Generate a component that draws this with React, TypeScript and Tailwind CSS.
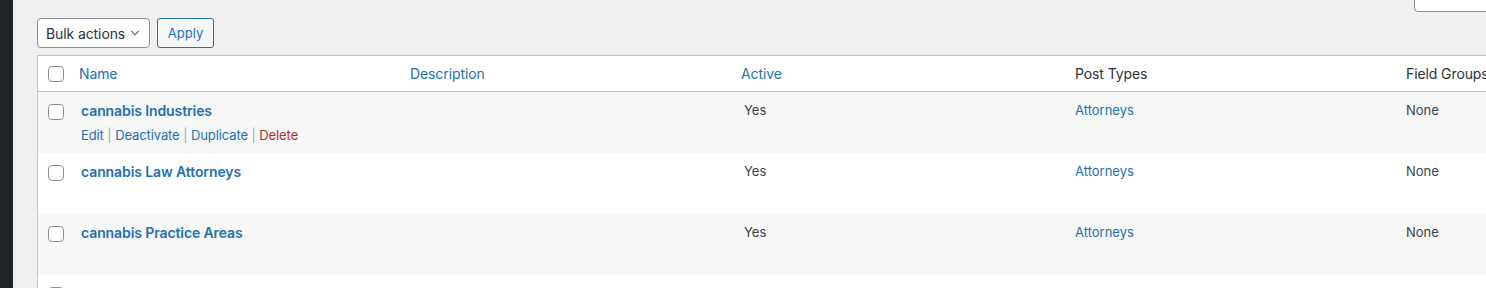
import { ChevronDown } from "lucide-react";

type Row = {
  name: string;
  description: string;
  active: string;
  postTypes: string;
  fieldGroups: string;
  actions?: boolean;
};

const rows: Row[] = [
  { name: "cannabis Industries", description: "", active: "Yes", postTypes: "Attorneys", fieldGroups: "None", actions: true },
  { name: "cannabis Law Attorneys", description: "", active: "Yes", postTypes: "Attorneys", fieldGroups: "None" },
  { name: "cannabis Practice Areas", description: "", active: "Yes", postTypes: "Attorneys", fieldGroups: "None" },
  { name: "Categories", description: "This is helpful WordPress Taxonomy", active: "Yes", postTypes: "Posts", fieldGroups: "None" },
];

const cols = "grid grid-cols-[31px_331px_331px_334px_331px_200px]";

function Checkbox() {
  return <div className="w-4 h-4 rounded-[4px] border border-[#8c8f94] bg-white" />;
}

export default function App() {
  return (
    <div className="flex h-[288px] overflow-hidden bg-[#f0f0f1] font-['Inter',sans-serif] text-[13px] text-[#3c434a]">
      <div className="w-[13px] shrink-0 bg-[#1d2327]" />
      <div className="flex-1 min-w-0 pl-[24px]">
        <div className="flex justify-end h-[18px]">
          <div className="w-[80px] h-[30px] -mt-[18px] bg-white border border-[#8c8f94] rounded-[4px] -mr-[8px]" />
        </div>
        <div className="flex gap-[7px] h-[37px]">
          <button className="h-[30px] w-[113px] flex items-center justify-between pl-[8px] pr-[7px] bg-white border border-[#8c8f94] rounded-[4px] text-[14px] tracking-[-0.1px] text-[#2c3338]">
            Bulk actions
            <ChevronDown className="w-[14px] h-[14px]" strokeWidth={1.75} />
          </button>
          <button className="h-[30px] w-[57px] pt-[2px] bg-[#f6f7f7] border border-[#2271b1] rounded-[3px] text-[13px] text-[#2271b1]">
            Apply
          </button>
        </div>
        <div className="w-[1600px] border border-[#c3c4c7] bg-white">
          <div className={`${cols} h-[36px] items-center border-b border-[#c3c4c7] text-[14px] tracking-[-0.1px]`}>
            <div className="pl-[10px]"><Checkbox /></div>
            <div className="pl-[10px] text-[#2271b1]">Name</div>
            <div className="pl-[10px] text-[#2271b1]">Description</div>
            <div className="pl-[10px] text-[#2271b1]">Active</div>
            <div className="pl-[10px] text-[#2c3338]">Post Types</div>
            <div className="pl-[10px] text-[#2c3338]">Field Groups</div>
          </div>
          {rows.map((r, i) => (
            <div key={r.name} className={`${cols} h-[61px] items-start ${i % 2 === 0 ? "bg-[#f6f7f7]" : "bg-white"}`}>
              <div className="pl-[10px] pt-[12px]"><Checkbox /></div>
              <div className="pl-[12px] pt-[9px]">
                <div className="text-[14px] leading-[20px] font-semibold tracking-[-0.1px] text-[#2271b1]">{r.name}</div>
                {r.actions && (
                  <div className="mt-[4px] leading-[20px] text-[#2271b1] tracking-[-0.1px]">
                    Edit <span className="text-[#a7aaad]">|</span> Deactivate{" "}
                    <span className="text-[#a7aaad]">|</span> Duplicate{" "}
                    <span className="text-[#a7aaad]">|</span>{" "}
                    <span className="text-[#b32d2e]">Delete</span>
                  </div>
                )}
              </div>
              <div className="pl-[10px] pt-[9px] leading-[20px]">{r.description}</div>
              <div className="pl-[13px] pt-[8px] leading-[20px]">{r.active}</div>
              <div className="pl-[10px] pt-[8px] leading-[20px] text-[#2271b1]">{r.postTypes}</div>
              <div className="pl-[10px] pt-[8px] leading-[20px]">{r.fieldGroups}</div>
            </div>
          ))}
        </div>
      </div>
    </div>
  );
}
